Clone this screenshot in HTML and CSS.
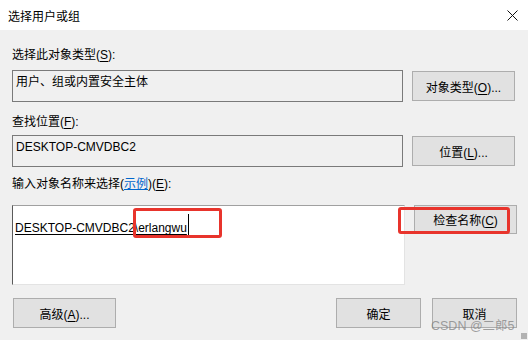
FILE: index.html
```html
<!DOCTYPE html>
<html>
<head>
    <title>选择用户或组</title>
    <link rel="stylesheet" href="styles.css">
</head>
<body>
    <div class="titlebar">
        <span class="title">选择用户或组</span>
        <svg class="close" width="11" height="11" viewBox="0 0 11 11">
            <path d="M0.5 0.5 L10.5 10.5 M10.5 0.5 L0.5 10.5" stroke="#111" stroke-width="1" fill="none"/>
        </svg>
    </div>
    <div class="dialog">
        <div class="label label-1">选择此对象类型(<u>S</u>):</div>
        <div class="row row-1">
            <div class="field">用户、组或内置安全主体</div>
            <button class="btn">对象类型(<u>O</u>)...</button>
        </div>

        <div class="label label-2">查找位置(<u>F</u>):</div>
        <div class="row row-2">
            <div class="field">DESKTOP-CMVDBC2</div>
            <button class="btn">位置(<u>L</u>)...</button>
        </div>

        <div class="label label-3">输入对象名称来选择(<a class="link">示例</a>)(<u>E</u>):</div>
        <div class="row row-3">
            <div class="names"><span class="name">DESKTOP-CMVDBC2\erlangwu</span><span class="caret"></span></div>
            <button class="btn btn-check">检查名称(<u>C</u>)</button>
            <!-- 标注框 -->
            <div class="mark mark-name"></div>
            <div class="mark mark-check"></div>
        </div>

        <div class="footer">
            <button class="btn btn-adv">高级(<u>A</u>)...</button>
            <div class="footer-right">
                <button class="btn btn-small">确定</button>
                <button class="btn btn-small">取消</button>
            </div>
        </div>
    </div>
    <div class="watermark">CSDN @二郎5</div>
    <div class="grip"></div>
</body>
</html>
```

FILE: styles.css
```css
body {
    margin: 0;
    padding: 0;
    width: 528px;
    height: 340px;
    background-color: #f0f0f0;
    color: #000;
    font-family: 'Liberation Sans', 'Noto Sans CJK SC', sans-serif;
    font-size: 12px;
    overflow: hidden;
    position: relative;
}
u {
    text-decoration: underline;
    text-underline-offset: 2px;
}
.titlebar {
    height: 30px;
    background-color: #fff;
    display: flex;
    align-items: center;
    justify-content: space-between;
    padding: 0 8px 0 8px;
}
.title {
    font-family: 'Noto Sans CJK SC', sans-serif;
    font-size: 12px;
}
.close {
    margin-right: 2px;
}
.dialog {
    padding: 0 11px 0 12px;
}
.label {
    height: 16px;
    line-height: 16px;
}
.label-1 { margin-top: 17px; }
.label-2 { margin-top: 12px; }
.label-3 { margin-top: 9px; }
.link {
    color: #0066cc;
    text-decoration: underline;
}
.row {
    display: flex;
    gap: 9px;
    align-items: flex-start;
}
.row-1 { margin-top: 7px; }
.row-2 { margin-top: 5px; }
.row-3 {
    margin-top: 13px;
    position: relative;
}
.field {
    width: 391px;
    height: 32px;
    border: 1px solid #7a7a7a;
    padding: 3px 3px;
    box-sizing: border-box;
    line-height: 16px;
}
.btn {
    width: 103px;
    height: 30px;
    margin-top: 1px;
    background-color: #e1e1e1;
    border: 1px solid #adadad;
    font-family: 'Liberation Sans', 'Noto Sans CJK SC', sans-serif;
    font-size: 12px;
    color: #000;
    padding: 0;
}
.names {
    width: 393px;
    height: 80px;
    box-sizing: border-box;
    background-color: #fff;
    border-top: 1px solid #a0a0a0;
    border-left: 1px solid #5a5a5a;
    border-right: 1px solid #e3e3e3;
    border-bottom: 1px solid #e3e3e3;
    padding: 8px 2px;
    line-height: 16px;
}
.name {
    text-decoration: underline;
    text-underline-offset: 2px;
}
.caret {
    display: inline-block;
    width: 1px;
    height: 24px;
    background-color: #000;
    vertical-align: -6px;
    margin-left: 1px;
}
.btn-check {
    margin-top: 0;
    height: 29px;
}
.mark {
    position: absolute;
    border: 3px solid #e8342c;
    border-radius: 3px;
    box-sizing: border-box;
}
.mark-name {
    left: 121px;
    top: 3px;
    width: 89px;
    height: 30px;
}
.mark-check {
    left: 386px;
    top: 2px;
    width: 112px;
    height: 27px;
}
.footer {
    margin-top: 13px;
    display: flex;
    justify-content: space-between;
    padding-left: 1px;
}
.footer .btn {
    margin-top: 0;
}
.footer-right {
    display: flex;
    gap: 11px;
}
.btn-small {
    width: 85px;
}
.watermark {
    position: absolute;
    left: 431px;
    top: 315px;
    font-family: 'Liberation Sans', 'Noto Sans CJK SC', sans-serif;
    font-size: 12.5px;
    color: rgba(130, 130, 130, 0.75);
}
.grip {
    position: absolute;
    right: 1px;
    bottom: 1px;
    width: 6px;
    height: 6px;
    background-image: radial-gradient(#b0b0b0 0.7px, transparent 0.9px);
    background-size: 2px 2px;
}
```
